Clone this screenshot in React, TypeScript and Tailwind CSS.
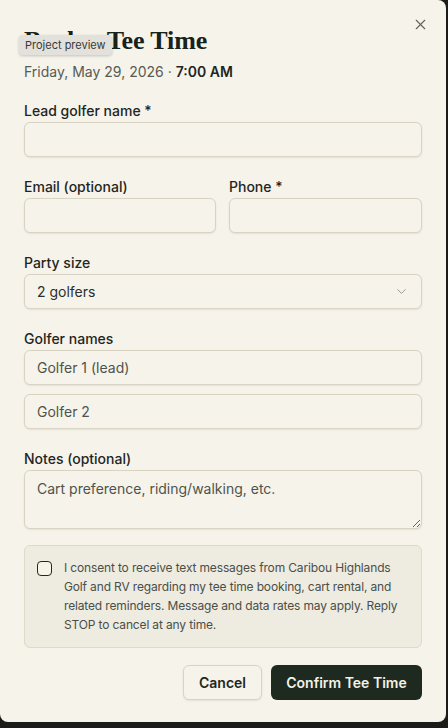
import { ChevronDown, X } from "lucide-react";

const inputCls =
  "w-full h-[35px] rounded-md border border-[#d8d3c3] bg-[#f6f3eb] px-3 text-[14px] text-[#2b2f28] placeholder:text-[#4f534b] shadow-[0_1px_2px_rgba(0,0,0,0.08)] outline-none";

function Label({ children }: { children: React.ReactNode }) {
  return <label className="block text-[14px] font-medium leading-5 text-[#1e261e] mb-[1px]">{children}</label>;
}

export default function App() {
  return (
    <div className="min-h-[728px] bg-[#1b1c1a] font-['Inter',sans-serif]">
      <div className="relative w-[446px] h-[722px] rounded-b-lg rounded-tr-lg bg-[#f6f3eb] px-6 pt-[26px]">
        {/* Close */}
        <button className="absolute right-[17px] top-[16px] text-[#5f625a]">
          <X size={17} strokeWidth={1.5} />
        </button>

        {/* Header */}
        <h1 className="font-['Liberation_Serif',serif] text-[26px] font-bold leading-[30px] text-[#17221a] tracking-[-0.1px]">
          Book a Tee Time
        </h1>
        <p className="mt-[6px] text-[14px] leading-5 text-[#575b53]">
          Friday, May 29, 2026 · <span className="font-semibold text-[#1e261e]">7:00 AM</span>
        </p>

        {/* Tooltip overlay */}
        <div className="absolute left-[19px] top-[35px] h-[20px] px-[6px] flex items-center rounded-sm bg-[#e3e1db] text-[11px] text-[#3a3a38] shadow-[0_1px_3px_rgba(0,0,0,0.2)]">
          Project preview
        </div>

        <form className="mt-[19px] flex flex-col">
          <div>
            <Label>Lead golfer name *</Label>
            <input className={inputCls} />
          </div>

          <div className="mt-[20px] grid grid-cols-[192px_1fr] gap-[13px]">
            <div>
              <Label>Email (optional)</Label>
              <input className={inputCls} />
            </div>
            <div>
              <Label>Phone *</Label>
              <input className={inputCls} />
            </div>
          </div>

          <div className="mt-[20px]">
            <Label>Party size</Label>
            <div className={`${inputCls} flex items-center justify-between`}>
              <span className="text-[#2b2f28]">2 golfers</span>
              <ChevronDown size={15} strokeWidth={1.4} className="text-[#8a8c84]" />
            </div>
          </div>

          <div className="mt-[20px]">
            <Label>Golfer names</Label>
            <div className="flex flex-col gap-[9px]">
              <input className={inputCls} placeholder="Golfer 1 (lead)" />
              <input className={inputCls} placeholder="Golfer 2" />
            </div>
          </div>

          <div className="mt-[20px]">
            <Label>Notes (optional)</Label>
            <textarea
              className={`${inputCls} h-[59px] pt-[8px] leading-5 resize-y block`}
              placeholder="Cart preference, riding/walking, etc."
            />
          </div>

          <div className="mt-[16px] flex gap-[12px] rounded-md border border-[#dedac9] bg-[#eeebe1] pl-[12px] pr-[10px] pt-[12px] pb-[13px]">
            <span className="mt-[3px] h-[15px] w-[15px] shrink-0 rounded-[4px] border-[1.5px] border-[#1e2a20] bg-[#f6f3eb]" />
            <p className="text-[12px] tracking-[-0.15px] leading-[19px] text-[#4b4f48]">
              I consent to receive text messages from Caribou Highlands Golf and RV regarding my tee time booking, cart
              rental, and related reminders. Message and data rates may apply. Reply STOP to cancel at any time.
            </p>
          </div>

          <div className="mt-[17px] flex justify-end gap-[9px]">
            <button
              type="button"
              className="h-[35px] w-[79px] rounded-md border border-[#d8d3c3] bg-[#f6f3eb] text-[14px] font-semibold text-[#1e261e] shadow-[0_1px_2px_rgba(0,0,0,0.08)]"
            >
              Cancel
            </button>
            <button
              type="button"
              className="h-[35px] w-[151px] rounded-md bg-[#1e2a20] text-[14px] font-semibold text-[#f4f1e8]"
            >
              Confirm Tee Time
            </button>
          </div>
        </form>
      </div>
    </div>
  );
}
